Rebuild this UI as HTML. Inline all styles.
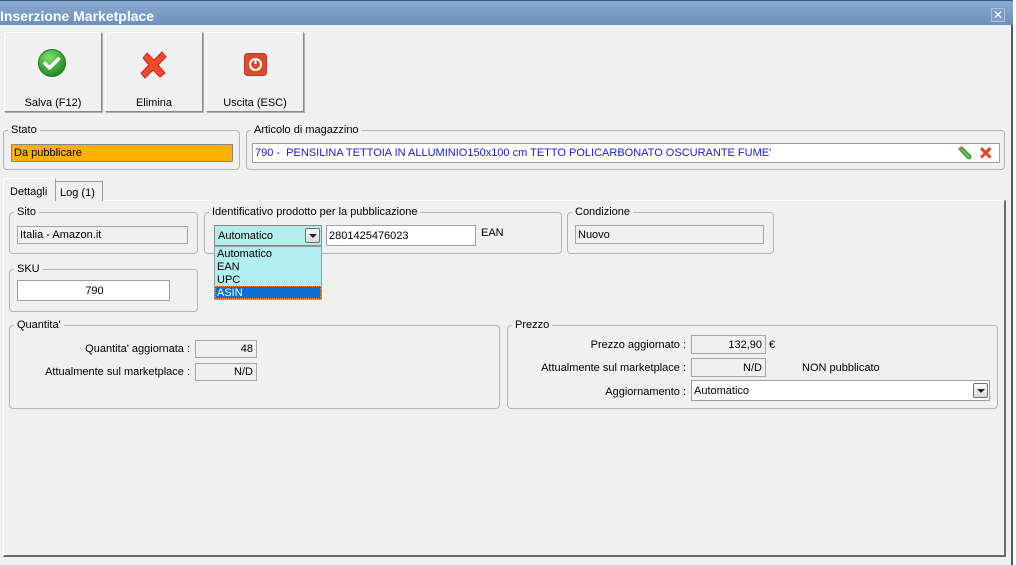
<!DOCTYPE html>
<html><head><meta charset="utf-8"><style>
*{box-sizing:border-box;margin:0;padding:0}
body{width:1016px;height:565px;background:#fff;position:relative;overflow:hidden;font-family:"Liberation Sans","DejaVu Sans",sans-serif;font-size:11px;color:#000}
.a{position:absolute}
.win{left:0;top:0;width:1013px;height:565px;background:#f0f0f0;border-right:2px solid #3b5a80}
.title{left:0;top:0;width:1013px;height:25px;background:linear-gradient(#8aaad0,#6b90bd);border-top:1px solid #3b5a80;color:#fff;font-weight:bold;font-size:14px;line-height:14px;padding-top:8px}
.close{left:991px;top:8px;width:14px;height:14px;background:#7d9cc6;border:1px solid #a9c0dd;color:#fff;font-size:12px;line-height:12px;text-align:center;font-weight:bold}
.btn{top:32px;width:98px;height:80px;border:1px solid #fff;border-right-color:#8a8a8a;border-bottom-color:#8a8a8a;background:#f0f0f0;box-shadow:1px 1px 0 #b0b0b0}
.btn span{position:absolute;left:0;right:0;top:64px;text-align:center}
.grp{border:1px solid #b4b4b4;border-radius:4px}
.lg{background:#f0f0f0;padding:0 3px;position:absolute;top:-8px;left:4px;line-height:14px}
.fld{border:1px solid #a0a0a0;line-height:18px;padding-left:2px;white-space:nowrap;overflow:hidden}
.ro{background:#f0f0f0;border-color:#a5a5a5}
.wh{background:#fff}
.r{text-align:right;padding-right:3px}
.arrow{width:15px;height:15px;border:1px solid #707070;border-radius:2px;background:linear-gradient(#fafafa,#d8d8d8)}
.arrow:after{content:"";position:absolute;left:3px;top:5px;border-left:4px solid transparent;border-right:4px solid transparent;border-top:4px solid #222}
</style></head><body>
<div class="a win"></div>
<div class="a title">Inserzione Marketplace</div>
<div class="a close">✕</div>

<div class="a btn" style="left:4px"><svg class="a" style="left:32px;top:15px" width="30" height="30" viewBox="0 0 30 30"><defs><radialGradient id="g" cx="40%" cy="30%" r="70%"><stop offset="0" stop-color="#7ee06a"/><stop offset="1" stop-color="#1e8a1e"/></radialGradient></defs><circle cx="15" cy="15" r="13.5" fill="url(#g)" stroke="#1a7a1a"/><path d="M8 15.5l4.5 4.5 9-9" fill="none" stroke="#fff" stroke-width="3.5" stroke-linecap="round" stroke-linejoin="round"/></svg><span>Salva (F12)</span></div>
<div class="a btn" style="left:105px"><svg class="a" style="left:33px;top:17px" width="30" height="30" viewBox="0 0 30 30"><path d="M4 8l4-5 7 7 8-8 4 5-8 8 7 8-5 4-7-7-8 8-4-5 8-8z" fill="#f04a2a" stroke="#c22" stroke-width="1"/></svg><span>Elimina</span></div>
<div class="a btn" style="left:206px"><svg class="a" style="left:37px;top:20px" width="23" height="23" viewBox="0 0 23 23"><rect x=".5" y=".5" width="22" height="22" rx="3" fill="#de4a2a" stroke="#b33"/><circle cx="11.5" cy="11.5" r="5.5" fill="none" stroke="#fff" stroke-width="2"/><path d="M11.5 5v6" stroke="#fff" stroke-width="2"/></svg><span>Uscita (ESC)</span></div>

<div class="a grp" style="left:3px;top:130px;width:237px;height:40px"><span class="lg">Stato</span></div>
<div class="a fld" style="left:11px;top:144px;width:222px;height:18px;background:#ffb000;border-color:#888;line-height:17px">Da pubblicare</div>
<div class="a grp" style="left:246px;top:130px;width:759px;height:40px"><span class="lg">Articolo di magazzino</span></div>
<div class="a fld wh" style="left:252px;top:143px;width:748px;height:20px;color:#1a1ae0;line-height:19px">790 - &nbsp;PENSILINA TETTOIA IN ALLUMINIO150x100 cm TETTO POLICARBONATO OSCURANTE FUME'</div>
<svg class="a" style="left:957px;top:145px" width="16" height="16" viewBox="0 0 16 16"><path d="M2 4l3-2 9 9-1 3-3-1z" fill="#5ac84a" stroke="#2a8a2a"/><path d="M2 4l3-2" stroke="#e55" stroke-width="2"/></svg>
<svg class="a" style="left:979px;top:146px" width="13" height="13" viewBox="0 0 13 13"><path d="M1 3l2-2 3.5 3.5 4-3.5 2 2-3.5 4 3.5 3.5-2 2-4-3.5-3.5 3.5-2-2 3.5-3.5z" fill="#e8442a"/></svg>

<div class="a" style="left:3px;top:200px;width:1003px;height:357px;border:1px solid #fff;border-right:2px solid #6a6a6a;border-bottom:2px solid #6a6a6a"></div>
<div class="a" style="left:55px;top:181px;width:48px;height:20px;border:1px solid #999;border-bottom:none;background:#f0f0f0;padding:5px 0 0 4px">Log (1)</div>
<div class="a" style="left:3px;top:178px;width:53px;height:23px;border:1px solid #fff;border-right:1px solid #999;border-bottom:none;background:#f0f0f0;padding:7px 0 0 6px">Dettagli</div>

<div class="a grp" style="left:9px;top:212px;width:189px;height:42px"><span class="lg">Sito</span></div>
<div class="a fld ro" style="left:17px;top:226px;width:171px;height:18px;line-height:17px">Italia - Amazon.it</div>
<div class="a grp" style="left:204px;top:212px;width:358px;height:42px"><span class="lg">Identificativo prodotto per la pubblicazione</span></div>
<div class="a fld" style="left:214px;top:225px;width:108px;height:21px;background:#b2eeee;border-color:#888;line-height:21px;padding-left:3px">Automatico</div>
<div class="a arrow" style="left:305px;top:228px"></div>
<div class="a fld wh" style="left:326px;top:225px;width:150px;height:21px;line-height:20px">2801425476023</div>
<div class="a" style="left:481px;top:227px">EAN</div>
<div class="a" style="left:214px;top:246px;width:108px;height:54px;background:#b2eeee;border:1px solid #999;line-height:13px;padding-left:2px;padding-top:1px">Automatico<br>EAN<br>UPC</div>
<div class="a" style="left:215px;top:286px;width:106px;height:13px;background:#0a6fd6;color:#fff;border:1px dotted #f80;line-height:12px;padding-left:1px">ASIN</div>
<div class="a grp" style="left:567px;top:212px;width:207px;height:42px"><span class="lg">Condizione</span></div>
<div class="a fld ro" style="left:575px;top:225px;width:189px;height:19px">Nuovo</div>

<div class="a grp" style="left:9px;top:269px;width:189px;height:43px"><span class="lg">SKU</span></div>
<div class="a fld wh" style="left:17px;top:280px;width:153px;height:21px;text-align:center;line-height:20px">790</div>

<div class="a grp" style="left:9px;top:325px;width:491px;height:84px"><span class="lg">Quantita'</span></div>
<div class="a" style="left:20px;top:343px;width:170px;text-align:right">Quantita' aggiornata :</div>
<div class="a fld ro r" style="left:195px;top:340px;width:62px;height:18px;line-height:17px">48</div>
<div class="a" style="left:20px;top:366px;width:170px;text-align:right">Attualmente sul marketplace :</div>
<div class="a fld ro r" style="left:195px;top:363px;width:62px;height:18px;line-height:17px">N/D</div>

<div class="a grp" style="left:507px;top:325px;width:491px;height:84px"><span class="lg">Prezzo</span></div>
<div class="a" style="left:510px;top:339px;width:176px;text-align:right">Prezzo aggiornato :</div>
<div class="a fld ro r" style="left:691px;top:335px;width:75px;height:19px">132,90</div>
<div class="a" style="left:769px;top:339px">€</div>
<div class="a" style="left:510px;top:362px;width:176px;text-align:right">Attualmente sul marketplace :</div>
<div class="a fld ro r" style="left:691px;top:358px;width:75px;height:19px">N/D</div>
<div class="a" style="left:802px;top:362px">NON pubblicato</div>
<div class="a" style="left:510px;top:386px;width:176px;text-align:right">Aggiornamento :</div>
<div class="a fld wh" style="left:691px;top:380px;width:299px;height:21px;line-height:20px">Automatico</div>
<div class="a arrow" style="left:973px;top:383px"></div>
</body></html>
